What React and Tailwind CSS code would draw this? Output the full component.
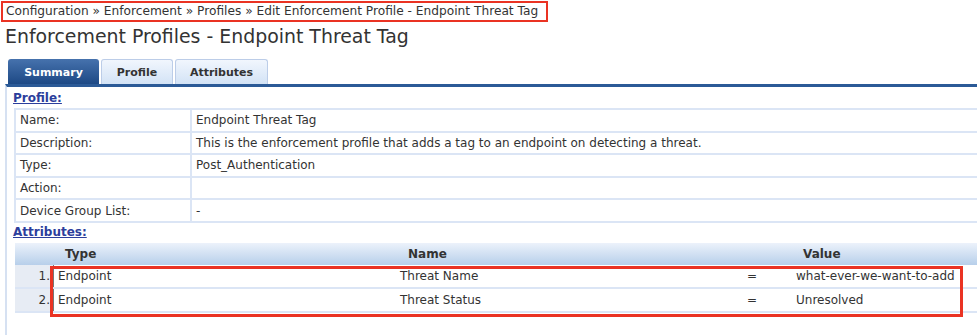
import React from 'react';

const profileRows = [
    ['Name:', 'Endpoint Threat Tag'],
    ['Description:', 'This is the enforcement profile that adds a tag to an endpoint on detecting a threat.'],
    ['Type:', 'Post_Authentication'],
    ['Action:', ''],
    ['Device Group List:', '-'],
];

const attributes = [
    { type: 'Endpoint', name: 'Threat Name', value: 'what-ever-we-want-to-add' },
    { type: 'Endpoint', name: 'Threat Status', value: 'Unresolved' },
];

const App = () => {
    return (
        <div className="w-[977px] h-[335px] overflow-hidden bg-white text-[#333] font-['DejaVu_Sans',Verdana,sans-serif]">
            {/* breadcrumb */}
            <div className="pl-px pt-px">
                <div className="w-[547px] h-[21px] border-2 border-[#ea3323] pl-[3px] text-[12.2px] leading-[16px] whitespace-nowrap">
                    Configuration » Enforcement » Profiles » Edit Enforcement Profile - Endpoint Threat Tag
                </div>
            </div>
            <h1 className="pl-[5px] mt-[2px] text-[18.9px] leading-[24px] whitespace-nowrap">Enforcement Profiles - Endpoint Threat Tag</h1>

            {/* tabs */}
            <div className="flex items-end gap-[2px] pl-[8px] mt-[11px] h-[25px]">
                <div className="w-[91px] h-[25px] rounded-t-[3px] bg-linear-to-b from-[#4672ad] to-[#1d4985] text-white text-[11px] font-bold flex items-center justify-center pt-[3px]">Summary</div>
                <div className="w-[72px] h-[25px] rounded-t-[3px] border border-b-0 border-[#bccde8] bg-linear-to-b from-[#f1f6fd] to-[#d3e3f6] text-[#333] text-[11px] font-bold flex items-center justify-center pt-[3px]">Profile</div>
                <div className="w-[93px] h-[25px] rounded-t-[3px] border border-b-0 border-[#bccde8] bg-linear-to-b from-[#f1f6fd] to-[#d3e3f6] text-[#333] text-[11px] font-bold flex items-center justify-center pt-[3px]">Attributes</div>
            </div>

            {/* panel */}
            <div className="ml-[5px] h-[260px] border-t-[3px] border-t-[#2b5a97] border-l-2 border-l-[#d6e1f2] pl-[6px]">
                <a className="block mt-[4px] text-[12px] leading-[15px] font-bold text-[#2c3e9c] underline">Profile:</a>
                <table className="ml-px mt-[2px] w-[970px] border-separate border-spacing-[2px] bg-[#dbe5f5] text-[12px]">
                    <tbody>
                        {profileRows.map(([label, value]) => (
                            <tr key={label}>
                                <td className="w-[174px] h-[20.6px] bg-white pl-[4px] p-0 leading-[14px] whitespace-nowrap">{label}</td>
                                <td className="h-[20.6px] bg-white pl-[4px] p-0 leading-[14px] whitespace-nowrap">{value}</td>
                            </tr>
                        ))}
                    </tbody>
                </table>

                <a className="block mt-[2px] text-[12px] leading-[15px] font-bold text-[#2c3e9c] underline">Attributes:</a>
                <div className="relative ml-[2px] mt-[3px] w-[965px]">
                    <div className="flex h-[22px] bg-linear-to-b from-[#ecf2fb] to-[#b7cfea] text-[12px] font-bold items-center">
                        <div className="w-[38px]"></div>
                        <div className="w-[343px] pl-[12px]">Type</div>
                        <div className="w-[344px] pl-[12px]">Name</div>
                        <div className="w-[50px]"></div>
                        <div className="flex-1 pl-[13px]">Value</div>
                    </div>
                    {attributes.map((a, i) => (
                        <div key={i} className="flex h-[24px] border-b-2 border-[#dbe5f5] text-[12px] items-stretch">
                            <div className="w-[38px] bg-[#e7ecf4] text-right pr-[3px] leading-[23px]">{i + 1}.</div>
                            <div className="w-[343px] pl-[4px] leading-[23px] border-l border-[#777]">{a.type}</div>
                            <div className="w-[344px] pl-[4px] leading-[23px]">{a.name}</div>
                            <div className="w-[50px] pl-[7px] leading-[23px]">=</div>
                            <div className="flex-1 pl-[6px] leading-[23px] whitespace-nowrap">{a.value}</div>
                        </div>
                    ))}
                    {/* highlight annotation */}
                    <div className="absolute left-[35px] top-[23px] w-[913px] h-[51px] border-[3px] border-[#ea3323] pointer-events-none"></div>
                </div>
            </div>
        </div>
    );
};

export default App;
